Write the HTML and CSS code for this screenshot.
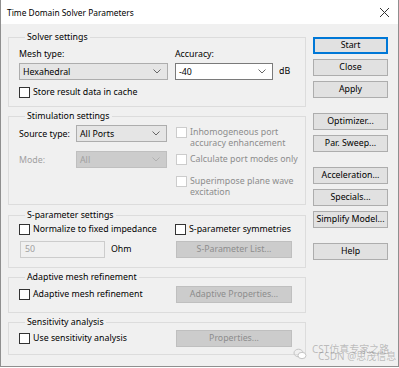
FILE: index.html
```html
<!DOCTYPE html>
<html lang="en">
<head>
    <meta charset="UTF-8" />
    <title>Time Domain Solver Parameters</title>
    <link rel="stylesheet" href="styles.css">
</head>
<body>
    <div class="window">
        <div class="titlebar">
            <span class="title">Time Domain Solver Parameters</span>
            <svg class="close-x" width="11" height="11" viewBox="0 0 11 11">
                <path d="M1 1 L10 10 M10 1 L1 10" stroke="#333" stroke-width="1" fill="none"/>
            </svg>
        </div>
        <div class="dialog">
            <div class="main">
                <fieldset class="group g-solver">
                    <legend>Solver settings</legend>
                    <div class="row">
                        <div class="col col-left">
                            <div class="lbl">Mesh type:</div>
                            <div class="combo">Hexahedral
                                <svg class="chev" width="8" height="5" viewBox="0 0 8 5"><polyline points="0.5,0.5 4,4 7.5,0.5" fill="none" stroke="#666"/></svg>
                            </div>
                        </div>
                        <div class="col">
                            <div class="lbl">Accuracy:</div>
                            <div class="acc-row">
                                <div class="combo edit">-40
                                    <svg class="chev" width="8" height="5" viewBox="0 0 8 5"><polyline points="0.5,0.5 4,4 7.5,0.5" fill="none" stroke="#666"/></svg>
                                </div>
                                <span class="unit">dB</span>
                            </div>
                        </div>
                    </div>
                    <label class="check store"><span class="box"></span>Store result data in cache</label>
                </fieldset>

                <fieldset class="group g-stim">
                    <legend>Stimulation settings</legend>
                    <div class="row">
                        <div class="col col-left">
                            <div class="field-row">
                                <span class="field-lbl">Source type:</span>
                                <div class="combo small">All Ports
                                    <svg class="chev" width="8" height="5" viewBox="0 0 8 5"><polyline points="0.5,0.5 4,4 7.5,0.5" fill="none" stroke="#666"/></svg>
                                </div>
                            </div>
                            <div class="field-row mode">
                                <span class="field-lbl disabled">Mode:</span>
                                <div class="combo small off">All
                                    <svg class="chev" width="8" height="5" viewBox="0 0 8 5"><polyline points="0.5,0.5 4,4 7.5,0.5" fill="none" stroke="#b0b0b0"/></svg>
                                </div>
                            </div>
                        </div>
                        <div class="col col-opts">
                            <label class="check multi off"><span class="box"></span><span>Inhomogeneous port<br>accuracy enhancement</span></label>
                            <label class="check multi off calc"><span class="box"></span><span>Calculate port modes only</span></label>
                            <label class="check multi off super"><span class="box"></span><span>Superimpose plane wave<br>excitation</span></label>
                        </div>
                    </div>
                </fieldset>

                <fieldset class="group g-spar">
                    <legend>S-parameter settings</legend>
                    <div class="row">
                        <div class="col col-left">
                            <label class="check"><span class="box"></span>Normalize to fixed impedance</label>
                            <div class="imp-row">
                                <div class="textbox off">50</div>
                                <span class="unit">Ohm</span>
                            </div>
                        </div>
                        <div class="col">
                            <label class="check"><span class="box"></span>S-parameter symmetries</label>
                            <div class="btn off wide spaced">S-Parameter List...</div>
                        </div>
                    </div>
                </fieldset>

                <fieldset class="group g-adapt">
                    <legend>Adaptive mesh refinement</legend>
                    <div class="row center">
                        <div class="col col-left">
                            <label class="check"><span class="box"></span>Adaptive mesh refinement</label>
                        </div>
                        <div class="col">
                            <div class="btn off wide">Adaptive Properties...</div>
                        </div>
                    </div>
                </fieldset>

                <fieldset class="group g-sens">
                    <legend>Sensitivity analysis</legend>
                    <div class="row center">
                        <div class="col col-left">
                            <label class="check"><span class="box"></span>Use sensitivity analysis</label>
                        </div>
                        <div class="col">
                            <div class="btn off wide">Properties...</div>
                        </div>
                    </div>
                </fieldset>
            </div>

            <div class="side">
                <div class="btn default">Start</div>
                <div class="btn">Close</div>
                <div class="btn">Apply</div>
                <div class="btn gap-big">Optimizer...</div>
                <div class="btn">Par. Sweep...</div>
                <div class="btn gap-big">Acceleration...</div>
                <div class="btn">Specials...</div>
                <div class="btn">Simplify Model...</div>
                <div class="btn gap-big">Help</div>
            </div>
        </div>

        <!-- watermark over the corner -->
        <div class="watermark">
            <svg class="wm-icon" width="14" height="12" viewBox="0 0 14 12">
                <ellipse cx="5.5" cy="5" rx="4.5" ry="3.8" fill="none" stroke="#c4c4c4"/>
                <ellipse cx="9" cy="7.5" rx="4" ry="3.2" fill="#fff" stroke="#c4c4c4"/>
            </svg>
            <div class="wm-text">
                <span class="wm-1">CST仿真专家之路</span>
                <span class="wm-2">CSDN @思茂信息</span>
            </div>
        </div>
    </div>
</body>
</html>
```

FILE: styles.css
```css
body {
    margin: 0;
    padding: 0;
    font-family: "Noto Sans", "Noto Sans CJK SC", sans-serif;
    font-size: 8.8px;
    color: #000;
    background-color: #ffffff;
}

.window {
    position: relative;
    width: 399px;
    height: 367px;
    box-sizing: border-box;
    border: 1px solid #8f8f8f;
    border-top: none;
    background-color: #f0f0f0;
    overflow: hidden;
}

.titlebar {
    height: 24px;
    background-color: #ffffff;
    display: flex;
    align-items: center;
    justify-content: space-between;
    padding: 0 8px 0 6px;
}

.title {
    font-size: 8.4px;
    margin-top: 1px;
}

.close-x {
    margin-top: 1px;
}

.dialog {
    display: flex;
    gap: 7px;
    padding-left: 7px;
}

.main {
    width: 298px;
    padding-top: 7px;
}

/* group boxes */
.group {
    box-sizing: border-box;
    margin: 0;
    border: 1px solid #dcdcdc;
    padding: 0 8px 0 10px;
    min-inline-size: 0;
}

.group legend {
    line-height: 12px;
    padding: 0 2px;
    margin-left: 6px;
}

.g-solver { height: 76px; padding-top: 5px; }
.g-stim { height: 95px; margin-top: 3px; padding-top: 3px; }
.g-spar { height: 59px; margin-top: 4px; padding-top: 2px; }
.g-adapt { height: 42px; margin-top: 3px; padding-top: 3px; }
.g-sens { height: 39px; margin-top: 3px; padding-top: 2px; }

.row {
    display: flex;
    gap: 7px;
}

.row.center {
    align-items: center;
}

.col {
    display: flex;
    flex-direction: column;
}

.col-left {
    width: 149px;
    flex-shrink: 0;
}

.lbl {
    line-height: 12px;
    margin-bottom: 3px;
}

/* combo boxes and inputs */
.combo {
    height: 17px;
    box-sizing: border-box;
    border: 1px solid #adadad;
    background-color: #e5e5e5;
    display: flex;
    align-items: center;
    justify-content: space-between;
    padding: 0 6px 0 3px;
}

.combo.edit {
    width: 98px;
    background-color: #ffffff;
    border-color: #7a7a7a;
}

.combo.small {
    width: 91px;
}

.combo.off {
    background-color: #cccccc;
    border-color: #bfbfbf;
    color: #a0a0a0;
}

.acc-row {
    display: flex;
    align-items: center;
    gap: 6px;
}

.unit {
    line-height: 17px;
}

.field-row {
    display: flex;
    align-items: center;
}

.field-row.mode {
    margin-top: 9px;
}

.field-lbl {
    width: 57px;
}

.disabled {
    color: #a0a0a0;
}

.textbox {
    width: 85px;
    height: 17px;
    box-sizing: border-box;
    border: 1px solid #cccccc;
    background-color: #f0f0f0;
    padding-left: 4px;
    line-height: 15px;
    margin-left: 1px;
}

.textbox.off {
    color: #a0a0a0;
}

.imp-row {
    display: flex;
    align-items: center;
    gap: 6px;
    margin-top: 5px;
}

/* checkboxes */
.check {
    display: flex;
    align-items: center;
    gap: 3px;
    line-height: 13px;
    white-space: nowrap;
}

.check .box {
    width: 11px;
    height: 11px;
    box-sizing: border-box;
    border: 1px solid #333333;
    background-color: #ffffff;
    flex-shrink: 0;
}

.store {
    margin-top: 6px;
}

.col-opts {
    flex: 1;
    margin-top: 2px;
    padding-left: 1px;
}

.check.multi {
    align-items: flex-start;
    line-height: 10.5px;
}

.check.off {
    color: #8c8c8c;
}

.check.off .box {
    border-color: #cccccc;
}

.check.calc {
    margin-top: 6px;
}

.check.super {
    margin-top: 11px;
}

/* buttons */
.btn {
    height: 17px;
    box-sizing: border-box;
    border: 1px solid #adadad;
    background-color: #e1e1e1;
    text-align: center;
    line-height: 15px;
}

.btn.default {
    border: 2px solid #0078d7;
    line-height: 13px;
}

.btn.off {
    background-color: #cccccc;
    border-color: #bfbfbf;
    color: #8c8c8c;
}

.btn.wide {
    width: 116px;
    margin-left: 1px;
}

.btn.spaced {
    margin-top: 5px;
}

.side {
    width: 75px;
    padding-top: 13px;
    display: flex;
    flex-direction: column;
    gap: 5px;
}

.side .gap-big {
    margin-top: 10px;
}

/* watermark */
.watermark {
    position: absolute;
    left: 292px;
    top: 343px;
    display: flex;
    align-items: center;
    gap: 5px;
    pointer-events: none;
}

.wm-text {
    position: relative;
    width: 82px;
    height: 21px;
}

.wm-text span {
    position: absolute;
    white-space: nowrap;
    font-size: 10px;
    line-height: 12px;
    color: rgba(120, 120, 120, 0.45);
}

.wm-1 {
    left: 0;
    top: 0;
}

.wm-2 {
    left: 6px;
    top: 7px;
}
```
